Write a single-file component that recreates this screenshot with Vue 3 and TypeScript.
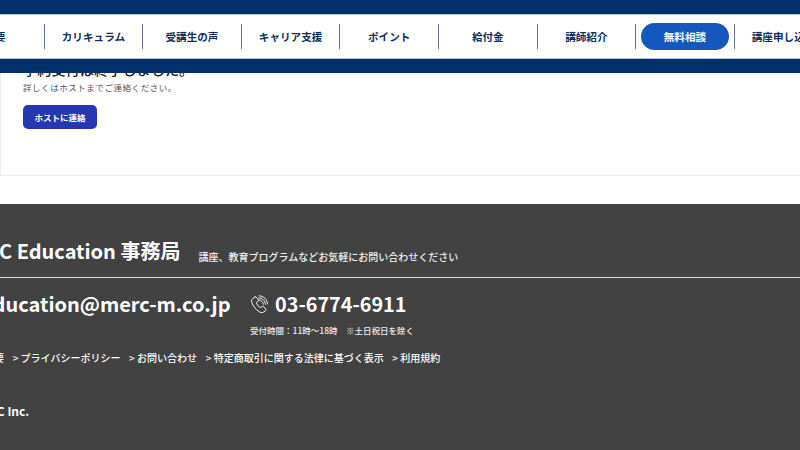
<script setup lang="ts">
const navItems: string[] = ['カリキュラム', '受講生の声', 'キャリア支援', 'ポイント', '給付金', '講師紹介']
const links: string[] = ['講座概要', 'プライバシーポリシー', 'お問い合わせ', '特定商取引に関する法律に基づく表示', '利用規約']
</script>

<template>
  <div class="page">
    <header class="band">
      <nav class="nav">
        <div class="nav-row">
          <a class="item">概要</a>
          <a v-for="n in navItems" :key="n" class="item">{{ n }}</a>
          <a class="item cta"><span class="pill">無料相談</span></a>
          <a class="item">講座申し込み</a>
        </div>
      </nav>
    </header>

    <main class="main">
      <section class="card">
        <h2 class="notice">予約受付は終了しました。</h2>
        <p class="detail">詳しくはホストまでご連絡ください。</p>
        <button class="host-btn">ホストに連絡</button>
      </section>
    </main>

    <footer class="footer">
      <div class="title-row">
        <h3 class="title">MERC Education 事務局</h3>
        <span class="lead">講座、教育プログラムなどお気軽にお問い合わせください</span>
      </div>
      <div class="rule"></div>
      <div class="contact-row">
        <span class="email">education@merc-m.co.jp</span>
        <div class="tel-block">
          <div class="tel">
            <svg class="phone" viewBox="0 0 24 24" fill="none" stroke="#fff" stroke-width="1.200" stroke-linecap="round" stroke-linejoin="round">
              <path d="M6.400 2.500 3.600 4.300C1.600 5.600 1.500 8.400 3 11.400c1.800 3.500 4.300 6.700 7.400 9 2.300 1.700 4.900 2.500 6.800 1.200l2.500-1.800c.7-.5.7-1.300.2-1.900l-2.600-3.100c-.5-.6-1.200-.7-1.900-.3l-1.700 1.100c-.5.300-1 .3-1.500-.1-1.500-1.300-3-3.200-3.900-5-.3-.6-.2-1.100.3-1.400l1.700-1.100c.6-.4.8-1.100.5-1.700L8.200 3c-.4-.7-1.100-.9-1.800-.5Z" />
              <path d="M11 6.200c3.200.1 5.600 2.400 5.900 5.500" />
              <path d="M11.200 3.600c4.500.1 8 3.500 8.300 8" />
              <path d="M11.500 1c5.800.2 10.300 4.600 10.700 10.300" />
            </svg>
            <span>03-6774-6911</span>
          </div>
          <p class="hours">受付時間：11時～18時　※土日祝日を除く</p>
        </div>
      </div>
      <ul class="links">
        <li v-for="l in links" :key="l">&gt; {{ l }}</li>
      </ul>
      <p class="copy">MERC Inc.</p>
    </footer>
  </div>
</template>

<style>
html, body { margin: 0; padding: 0; background: #fff; }
</style>

<style scoped>
.page {
  position: relative;
  width: 800px;
  height: 450px;
  overflow: hidden;
  background: #fff;
  font-family: "Noto Sans CJK JP", "Noto Sans", sans-serif;
}
.band {
  position: absolute;
  top: 0;
  left: 0;
  right: 0;
  height: 73px;
  padding-top: 14px;
  box-sizing: border-box;
  background: #012f6b;
  z-index: 2;
}
.nav {
  height: 45px;
  box-sizing: border-box;
  background: #fff;
  border-top: 1px solid #b4c3de;
  border-bottom: 1px solid #b4c3de;
  overflow: hidden;
}
.nav-row {
  display: flex;
  margin-left: -54px;
  width: 900px;
  height: 100%;
  align-items: center;
}
.item {
  flex: 0 0 98.600px;
  height: 25px;
  box-sizing: border-box;
  display: flex;
  align-items: center;
  justify-content: center;
  border-right: 1px solid #5d7590;
  color: #0f2f5c;
  font-size: 10.600px;
  font-weight: 700;
  white-space: nowrap;
}
.cta { position: relative; }
.pill {
  width: 88px;
  height: 27px;
  border-radius: 14px;
  background: #1558bd;
  color: #fff;
  display: flex;
  align-items: center;
  justify-content: center;
  flex: none;
}
.main {
  height: 204px;
  box-sizing: border-box;
  padding-bottom: 28px;
}
.card {
  height: 176px;
  box-sizing: border-box;
  padding: 59px 0 0 22px;
  border-left: 1px solid #ececec;
  border-bottom: 1px solid #ececec;
}
.notice {
  margin: 0;
  font-size: 14.200px;
  line-height: 20px;
  font-weight: 500;
  color: #222;
}
.detail {
  margin: 1px 0 0;
  font-size: 8.500px;
  line-height: 14px;
  letter-spacing: 0.550px;
  color: #555;
}
.host-btn {
  display: block;
  margin-top: 11px;
  width: 74px;
  height: 24px;
  padding: 0;
  border: 0;
  border-radius: 5px;
  background: #2539b0;
  color: #fff;
  font-family: inherit;
  font-size: 8.500px;
  font-weight: 700;
}
.footer {
  height: 246px;
  background: #424242;
  color: #fff;
}
.title-row {
  display: flex;
  align-items: flex-end;
  height: 73px;
  box-sizing: border-box;
  padding-bottom: 11px;
  margin-left: -44px;
}
.title {
  margin: 0;
  font-size: 20px;
  line-height: 30px;
  font-weight: 700;
  white-space: nowrap;
}
.lead {
  margin: 0 0 1px 18px;
  font-size: 10px;
  line-height: 16px;
  font-weight: 500;
  color: #f0f0f0;
  white-space: nowrap;
}
.rule {
  height: 1px;
  background: #d8d8d8;
}
.contact-row {
  display: flex;
  margin-left: -19px;
  padding-top: 11px;
}
.email {
  font-size: 20px;
  line-height: 30px;
  font-weight: 700;
  white-space: nowrap;
}
.tel-block { margin-left: 19.500px; }
.tel {
  display: flex;
  align-items: center;
  gap: 6px;
  font-size: 19.800px;
  line-height: 30px;
  font-weight: 700;
  white-space: nowrap;
}
.phone { width: 19px; height: 19px; flex: none; }
.hours {
  margin: 4px 0 0;
  font-size: 8.500px;
  line-height: 14px;
  font-weight: 500;
  color: #eee;
  white-space: nowrap;
}
.links {
  display: flex;
  gap: 8.700px;
  list-style: none;
  margin: 13px 0 0 -44px;
  padding: 0;
  font-size: 10px;
  line-height: 16px;
  font-weight: 500;
  white-space: nowrap;
}
.copy {
  margin: 36px 0 0 -29px;
  font-size: 12px;
  line-height: 18px;
  font-weight: 700;
  white-space: nowrap;
}
</style>
